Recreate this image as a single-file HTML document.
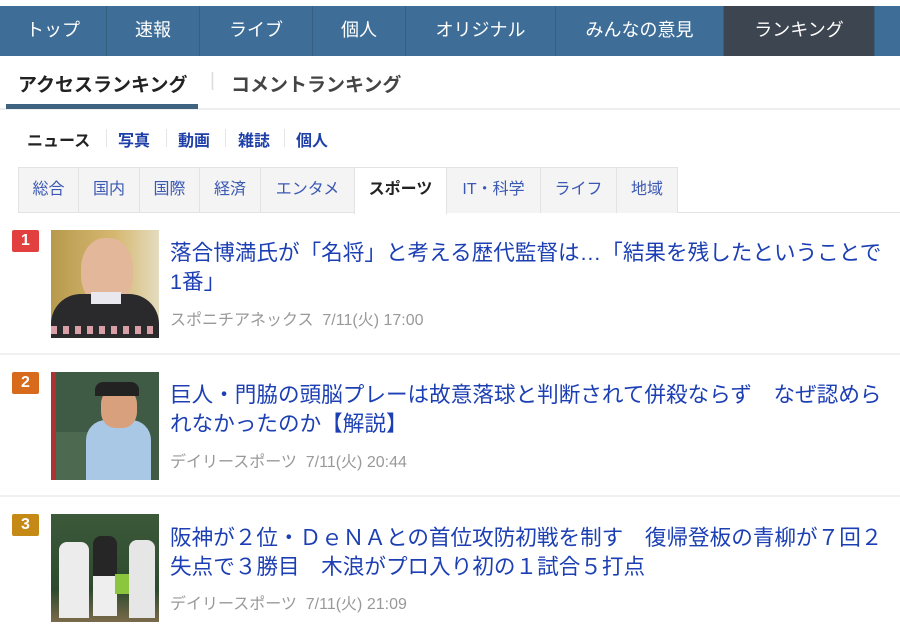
<!DOCTYPE html>
<html><head><meta charset="utf-8"><style>
*{margin:0;padding:0;box-sizing:border-box}
body{width:900px;height:635px;overflow:hidden;background:#fff;font-family:"Liberation Sans","Noto Sans CJK JP",sans-serif;position:relative}
.nav{position:absolute;top:6px;left:0;width:900px;height:50px;background:#3e6e97}
.nav div{position:absolute;top:0;height:50px;line-height:48px;text-align:center;color:#fff;font-size:18px;border-right:1px solid #35607f}
.nav .act{background:#3d4550}
.tabs2{position:absolute;top:56px;left:0;width:900px;height:54px;border-bottom:2px solid #eee}
.tabs2 span{position:absolute;top:14px;font-size:19px;font-weight:bold}
.ul{position:absolute;left:6px;top:104px;width:192px;height:5px;background:#3e6380}
.sub{position:absolute;top:127px;font-size:16px;font-weight:bold;color:#1e3fa8}
.sep{position:absolute;top:129px;width:1px;height:18px;background:#e5e5e5}
.cat{position:absolute;top:167px;height:46px;background:#f4f4f4;border:1px solid #e3e3e3;border-bottom:none;color:#3b58b3;font-size:16px;line-height:43px;text-align:center}
.cat.a{background:#fff;color:#222;font-weight:bold}
.cline{position:absolute;top:212px;left:18px;width:882px;height:1px;background:#e3e3e3}
.badge{position:absolute;left:12px;width:27px;height:22px;color:#fff;font-weight:bold;font-size:16px;text-align:center;line-height:22px;border-radius:2px}
.th{position:absolute;left:51px;width:108px;height:108px;overflow:hidden}
.t{position:absolute;left:170px;width:716px;font-size:21.6px;line-height:29px;color:#1c3fb4}
.m{position:absolute;left:170px;font-size:16px;color:#999}
.hr{position:absolute;left:0;width:900px;height:2px;background:#f0f0f0}
</style></head><body>
<div class="nav">
<div style="left:0;width:107px">トップ</div>
<div style="left:107px;width:93px">速報</div>
<div style="left:200px;width:113px">ライブ</div>
<div style="left:313px;width:93px">個人</div>
<div style="left:406px;width:150px">オリジナル</div>
<div style="left:556px;width:168px">みんなの意見</div>
<div class="act" style="left:724px;width:151px">ランキング</div>
</div>
<div class="tabs2"><span style="left:18px;color:#222">アクセスランキング</span><span style="left:210px;color:#ddd;font-weight:normal">|</span><span style="left:231px;color:#444">コメントランキング</span></div>
<div class="ul"></div>
<div class="sub" style="left:27px;color:#222">ニュース</div><div class="sep" style="left:106px"></div>
<div class="sub" style="left:118px">写真</div><div class="sep" style="left:166px"></div>
<div class="sub" style="left:178px">動画</div><div class="sep" style="left:225px"></div>
<div class="sub" style="left:238px">雑誌</div><div class="sep" style="left:284px"></div>
<div class="sub" style="left:296px">個人</div>
<div class="cat" style="left:18px;width:61px">総合</div>
<div class="cat" style="left:78px;width:62px">国内</div>
<div class="cat" style="left:139px;width:61px">国際</div>
<div class="cat" style="left:199px;width:62px">経済</div>
<div class="cat" style="left:260px;width:95px">エンタメ</div>
<div class="cline"></div>
<div class="cat a" style="left:354px;width:93px;height:47px">スポーツ</div>
<div class="cat" style="left:446px;width:95px">IT・科学</div>
<div class="cat" style="left:540px;width:77px">ライフ</div>
<div class="cat" style="left:616px;width:62px">地域</div>

<div class="badge" style="top:230px;background:#e2403f">1</div>
<div class="th" style="top:230px;background:linear-gradient(90deg,#b89a4e,#d6b871 60%,#e4dcc0)">
<div style="position:absolute;left:30px;top:8px;width:52px;height:68px;border-radius:45%;background:#e3b79a"></div>
<div style="position:absolute;left:0;top:64px;width:108px;height:44px;background:#2a2a2c;border-radius:30px 30px 0 0"></div>
<div style="position:absolute;left:40px;top:62px;width:30px;height:12px;background:#e8e8ee"></div>
<div style="position:absolute;left:0;top:96px;width:108px;height:8px;background:repeating-linear-gradient(90deg,#d9a0a8 0 6px,#2a2a2c 6px 12px)"></div>
</div>
<div class="t" style="top:238px">落合博満氏が「名将」と考える歴代監督は…「結果を残したということで<br>1番」</div>
<div class="m" style="top:306px">スポニチアネックス&nbsp; 7/11(火) 17:00</div>
<div class="hr" style="top:353px"></div>

<div class="badge" style="top:372px;background:#d86a1c">2</div>
<div class="th" style="top:372px;background:linear-gradient(90deg,#a33 0 5px,#3f5a45 5px)">
<div style="position:absolute;left:5px;top:60px;width:40px;height:48px;background:#4d6a50"></div>
<div style="position:absolute;left:35px;top:48px;width:65px;height:60px;background:#a8c8e6;border-radius:20px 20px 0 0"></div>
<div style="position:absolute;left:50px;top:16px;width:36px;height:40px;border-radius:40%;background:#d9a07e"></div>
<div style="position:absolute;left:44px;top:10px;width:44px;height:14px;background:#222;border-radius:8px 8px 0 0"></div>
</div>
<div class="t" style="top:380px">巨人・門脇の頭脳プレーは故意落球と判断されて併殺ならず　なぜ認められなかったのか【解説】</div>
<div class="m" style="top:448px">デイリースポーツ&nbsp; 7/11(火) 20:44</div>
<div class="hr" style="top:495px"></div>

<div class="badge" style="top:514px;background:#c58a16">3</div>
<div class="th" style="top:514px;background:linear-gradient(180deg,#3c5a3a,#2d4a2e 70%,#7a6a4a)">
<div style="position:absolute;left:8px;top:28px;width:30px;height:76px;background:#ececec;border-radius:8px 8px 0 0"></div>
<div style="position:absolute;left:42px;top:22px;width:24px;height:80px;background:#262626;border-radius:8px 8px 0 0"></div>
<div style="position:absolute;left:42px;top:62px;width:24px;height:40px;background:#eee"></div>
<div style="position:absolute;left:78px;top:26px;width:26px;height:78px;background:#e6e6e6;border-radius:8px 8px 0 0"></div>
<div style="position:absolute;left:64px;top:60px;width:14px;height:20px;background:#8cc63f"></div>
</div>
<div class="t" style="top:523px">阪神が２位・ＤｅＮＡとの首位攻防初戦を制す　復帰登板の青柳が７回２失点で３勝目　木浪がプロ入り初の１試合５打点</div>
<div class="m" style="top:590px">デイリースポーツ&nbsp; 7/11(火) 21:09</div>
</body></html>
